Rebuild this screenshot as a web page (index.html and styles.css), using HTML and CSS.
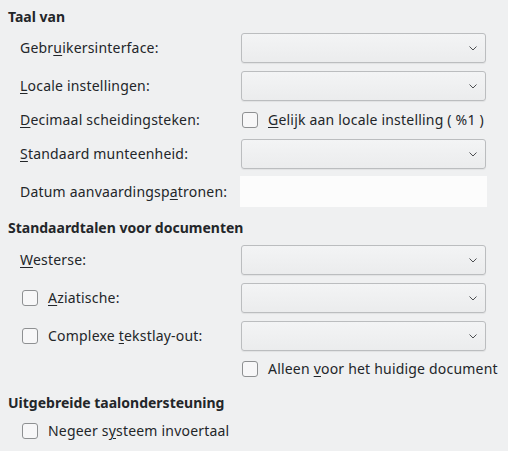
FILE: index.html
```html
<!DOCTYPE html>
<html>
<head>
<meta charset="utf-8">
<link rel="stylesheet" href="styles.css">
</head>
<body>
<div class="page">
  <div class="header h1">Taal van</div>
  <div class="rows">
    <div class="row"><span class="label">Gebr<u>u</u>ikersinterface:</span><div class="combo"><svg class="chev" width="8" height="5" viewBox="0 0 8 5"><path d="M0.5 0.5 L4 4 L7.5 0.5" fill="none" stroke="#4d4f52" stroke-width="1"/></svg></div></div>
    <div class="row"><span class="label"><u>L</u>ocale instellingen:</span><div class="combo"><svg class="chev" width="8" height="5" viewBox="0 0 8 5"><path d="M0.5 0.5 L4 4 L7.5 0.5" fill="none" stroke="#4d4f52" stroke-width="1"/></svg></div></div>
    <div class="row short"><span class="label"><u>D</u>ecimaal scheidingsteken:</span><div class="check"><span class="box"></span><span><u>G</u>elijk aan locale instelling ( %1 )</span></div></div>
    <div class="row"><span class="label"><u>S</u>tandaard munteenheid:</span><div class="combo"><svg class="chev" width="8" height="5" viewBox="0 0 8 5"><path d="M0.5 0.5 L4 4 L7.5 0.5" fill="none" stroke="#4d4f52" stroke-width="1"/></svg></div></div>
    <div class="row date-row"><span class="label">Datum aanvaardingsp<u>a</u>tronen:</span><div class="field"></div></div>
  </div>

  <div class="header h2">Standaardtalen voor documenten</div>
  <div class="rows">
    <div class="row"><span class="label"><u>W</u>esterse:</span><div class="combo"><svg class="chev" width="8" height="5" viewBox="0 0 8 5"><path d="M0.5 0.5 L4 4 L7.5 0.5" fill="none" stroke="#4d4f52" stroke-width="1"/></svg></div></div>
    <div class="row"><div class="check left"><span class="box"></span><span><u>A</u>ziatische:</span></div><div class="combo"><svg class="chev" width="8" height="5" viewBox="0 0 8 5"><path d="M0.5 0.5 L4 4 L7.5 0.5" fill="none" stroke="#4d4f52" stroke-width="1"/></svg></div></div>
    <div class="row"><div class="check left"><span class="box"></span><span>Complexe <u>t</u>ekstlay-out:</span></div><div class="combo"><svg class="chev" width="8" height="5" viewBox="0 0 8 5"><path d="M0.5 0.5 L4 4 L7.5 0.5" fill="none" stroke="#4d4f52" stroke-width="1"/></svg></div></div>
    <div class="row short shift"><span class="label"></span><div class="check"><span class="box"></span><span>Alleen <u>v</u>oor het huidige document</span></div></div>
  </div>

  <div class="header h3">Uitgebreide taalondersteuning</div>
  <div class="rows">
    <div class="row short"><div class="check left"><span class="box"></span><span>Negeer s<u>y</u>steem invoertaal</span></div></div>
  </div>
</div>
</body>
</html>
```

FILE: styles.css
```css
html, body {
  margin: 0;
  padding: 0;
  background: #eff0f1;
}
body {
  font-family: "Noto Sans", "Open Sans", sans-serif;
  font-size: 14px;
  line-height: 18px;
  color: #232629;
  width: 508px;
  height: 451px;
  overflow: hidden;
}
.page {
  padding: 8px 0 0 8px;
}
.header {
  font-weight: bold;
  height: 18px;
}
.h2 { margin-top: 12px; }
.h3 { margin-top: 14px; }
.rows {
  display: flex;
  flex-direction: column;
  gap: 8px;
  padding-left: 12px;
  margin-top: 7px;
  letter-spacing: 0.2px;
}
.h2 + .rows, .h3 + .rows { margin-top: 8px; }
.row {
  display: grid;
  grid-template-columns: 221px 245px;
  align-items: center;
  height: 30px;
}
.row.short { height: 22px; }
.row.shift { margin-top: -1px; }
.row.date-row { height: 31px; margin-top: -1px; }
.label, .check { white-space: nowrap; }
u {
  text-decoration: underline;
  text-decoration-thickness: 1px;
  text-underline-offset: 2px;
}
.combo {
  box-sizing: border-box;
  height: 30px;
  border: 1px solid #bbbdbf;
  border-radius: 3px;
  background: linear-gradient(#f3f4f5, #ebeced);
  box-shadow: 0 1px 1px rgba(0,0,0,0.06);
  display: flex;
  align-items: center;
  justify-content: flex-end;
  padding-right: 8px;
}
.chev { display: block; }
.field {
  height: 31px;
  width: 247px;
  margin-left: -1px;
  background: #fcfcfc;
}
.check {
  display: flex;
  align-items: center;
  gap: 10px;
}
.check.left { margin-left: 2px; }
.row > .check:not(.left) { margin-left: 1px; }
.box {
  box-sizing: border-box;
  width: 16px;
  height: 16px;
  border: 1px solid #8e9092;
  border-radius: 3px;
  background: #f7f7f8;
  flex: none;
}
```
